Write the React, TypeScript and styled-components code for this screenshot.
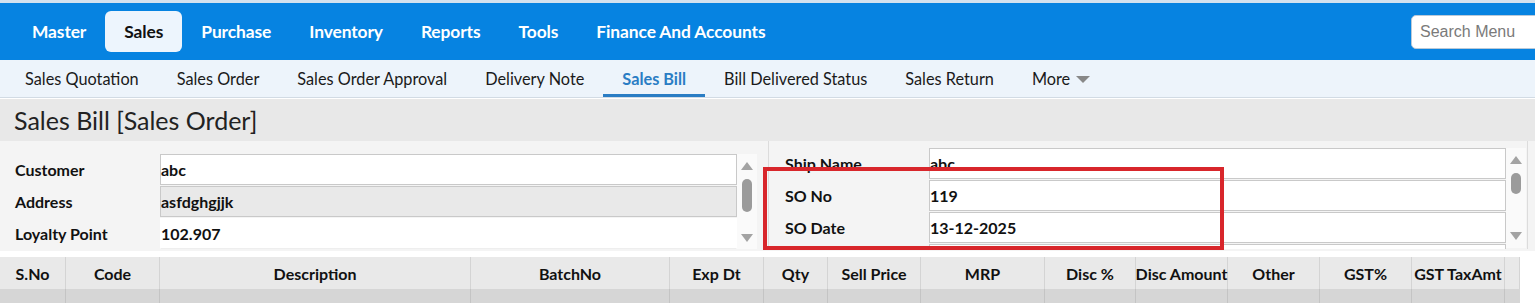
import React from "react"
import styled, { createGlobalStyle } from "styled-components"

const GlobalStyle = createGlobalStyle`
    * { box-sizing: border-box; }
    body {
        margin: 0;
        font-family: 'Lato', 'Noto Sans', sans-serif;
        background: #ffffff;
        color: #111;
        overflow: hidden;
    }
`

const Page = styled.div`
    width: 1535px;
    height: 303px;
    overflow: hidden;
    border-top: 3px solid #d3e2ef;
`

const TopBar = styled.div`
    height: 57px;
    background: #0683e1;
    display: flex;
    align-items: center;
    padding-left: 13px;
`
const MenuItem = styled.div<{ $active?: boolean }>`
    height: 41px;
    display: flex;
    align-items: center;
    padding: 0 19px;
    border-radius: 6px;
    font-size: 17.4px;
    font-weight: 700;
    letter-spacing: -0.1px;
    color: ${p => (p.$active ? "#111" : "#ffffff")};
    background: ${p => (p.$active ? "#edf5fd" : "transparent")};
`
const SearchBox = styled.input`
    margin-left: auto;
    width: 140px;
    height: 34px;
    margin-right: -16px;
    border: 1px solid #b9c9d8;
    border-radius: 5px;
    padding: 0 8px;
    font-family: 'Liberation Sans', Arial, sans-serif;
    font-size: 16px;
    &::placeholder { color: #7a7a7a; }
`

const SubBar = styled.div`
    height: 38px;
    background: #edf4fb;
    display: flex;
    align-items: stretch;
    padding-left: 6px;
    border-bottom: 1px solid #d2dbe4;
`
const SubItem = styled.div<{ $active?: boolean }>`
    display: flex;
    align-items: center;
    gap: 6px;
    padding: 0 19px;
    font-size: 16.3px;
    font-weight: ${p => (p.$active ? 700 : 400)};
    color: ${p => (p.$active ? "#2a7dc4" : "#1a1a1a")};
    border-bottom: 3px solid ${p => (p.$active ? "#2a7dc4" : "transparent")};
    padding-top: 3px;
`
const Caret = styled.span`
    width: 0;
    height: 0;
    border-left: 7px solid transparent;
    border-right: 7px solid transparent;
    border-top: 7px solid #888;
    margin-top: 2px;
`

const TitleBar = styled.div`
    margin-top: 1px;
    height: 42px;
    background: #e8e8e8;
    display: flex;
    align-items: center;
    padding-left: 14px;
    font-size: 25px;
    color: #222;
`

const FormArea = styled.div`
    position: relative;
    height: 110px;
    background: #f4f4f4;
    display: grid;
    grid-template-columns: 763px 1fr;
`
const Panel = styled.div<{ $top: number; $divider?: boolean }>`
    display: flex;
    padding-top: ${p => p.$top}px;
    height: 108px;
    overflow: hidden;
    ${p =>
        p.$divider &&
        `margin-left: 5px;
         border-left: 1px solid #dcdcdc;
         border-right: 1px solid #dcdcdc;
         margin-right: 7px;`}
`
const Fields = styled.div<{ $width: number }>`
    width: ${p => p.$width}px;
    display: flex;
    flex-direction: column;
`
const Row = styled.div<{ $labelWidth: number; $pad: number }>`
    display: grid;
    grid-template-columns: ${p => p.$labelWidth}px 1fr;
    height: 32px;
    flex-shrink: 0;
    align-items: stretch;
    & > span {
        padding-left: ${p => p.$pad}px;
    }
`
const Label = styled.span`
    font-size: 16px;
    font-weight: 700;
    display: flex;
    align-items: center;
    padding-bottom: 2px;
    color: #111;
`
const Field = styled.div<{ $tone?: "grey" | "plain" }>`
    background: ${p => (p.$tone === "grey" ? "#e9e9e9" : "#ffffff")};
    border: 1px solid ${p => (p.$tone === "plain" ? "#ffffff" : "#c9c9c9")};
    border-bottom-color: ${p => (p.$tone === "plain" ? "#eeeeee" : "#c9c9c9")};
    margin-bottom: 1px;
    display: flex;
    align-items: center;
    padding-left: 0;
    font-size: 16px;
    font-weight: 700;
    color: #111;
`

const ScrollTrack = styled.div<{ $height: number; $thumbTop: number; $thumbH: number }>`
    width: 20px;
    height: ${p => p.$height}px;
    background: #fafafa;
    display: flex;
    flex-direction: column;
    align-items: center;
    padding: 8px 0;
    & > i {
        width: 10px;
        height: ${p => p.$thumbH}px;
        margin-top: ${p => p.$thumbTop}px;
        background: #9b9b9b;
        border-radius: 5px;
    }
`
const ArrowUp = styled.b`
    width: 0;
    height: 0;
    border-left: 6px solid transparent;
    border-right: 6px solid transparent;
    border-bottom: 8px solid #a3a3a3;
`
const ArrowDown = styled.b`
    margin-top: auto;
    width: 0;
    height: 0;
    border-left: 6px solid transparent;
    border-right: 6px solid transparent;
    border-top: 8px solid #a3a3a3;
`

const Highlight = styled.div`
    position: absolute;
    left: 763px;
    top: 26px;
    width: 461px;
    height: 83px;
    border: 4px solid #d8262b;
    pointer-events: none;
`

const Grid = styled.div`
    margin-top: 6px;
    width: 1520px;
    display: grid;
    grid-template-columns: 66px 94px 311px 199px 94px 64px 93px 124px 91px 92px 92px 92px 93px 15px;
`
const HeadCell = styled.div`
    height: 32px;
    background: #e9e9e9;
    border-right: 1px solid #d4d4d4;
    display: flex;
    align-items: center;
    justify-content: center;
    font-size: 16px;
    font-weight: 700;
    white-space: nowrap;
    &:last-child { border-right: none; }
`
const BodyCell = styled.div`
    height: 14px;
    background: #d6d6d6;
    border-right: 1px solid #c4c4c4;
    &:last-child { border-right: none; }
`

const menu = ["Master", "Sales", "Purchase", "Inventory", "Reports", "Tools", "Finance And Accounts"]
const subMenu = ["Sales Quotation", "Sales Order", "Sales Order Approval", "Delivery Note", "Sales Bill", "Bill Delivered Status", "Sales Return"]
const columns = ["S.No", "Code", "Description", "BatchNo", "Exp Dt", "Qty", "Sell Price", "MRP", "Disc %", "Disc Amount", "Other", "GST%", "GST TaxAmt", ""]

export default function App() {
    return (
        <Page>
            <GlobalStyle />
            <TopBar>
                {menu.map(m => (
                    <MenuItem key={m} $active={m === "Sales"}>{m}</MenuItem>
                ))}
                <SearchBox placeholder="Search Menu" />
            </TopBar>
            <SubBar>
                {subMenu.map(s => (
                    <SubItem key={s} $active={s === "Sales Bill"}>{s}</SubItem>
                ))}
                <SubItem>More <Caret /></SubItem>
            </SubBar>
            <TitleBar>Sales Bill [Sales Order]</TitleBar>
            <FormArea>
                <Panel $top={13}>
                    <Fields $width={737}>
                        <Row $labelWidth={160} $pad={15}>
                            <Label>Customer</Label>
                            <Field>abc</Field>
                        </Row>
                        <Row $labelWidth={160} $pad={15}>
                            <Label>Address</Label>
                            <Field $tone="grey">asfdghgjjk</Field>
                        </Row>
                        <Row $labelWidth={160} $pad={15}>
                            <Label>Loyalty Point</Label>
                            <Field $tone="plain">102.907</Field>
                        </Row>
                    </Fields>
                    <ScrollTrack $height={96} $thumbTop={9} $thumbH={33}>
                        <ArrowUp />
                        <i />
                        <ArrowDown />
                    </ScrollTrack>
                </Panel>
                <Panel $top={7} $divider>
                    <Fields $width={737}>
                        <Row $labelWidth={160} $pad={16}>
                            <Label>Ship Name</Label>
                            <Field>abc</Field>
                        </Row>
                        <Row $labelWidth={160} $pad={16}>
                            <Label>SO No</Label>
                            <Field>119</Field>
                        </Row>
                        <Row $labelWidth={160} $pad={16}>
                            <Label>SO Date</Label>
                            <Field>13-12-2025</Field>
                        </Row>
                        <Row $labelWidth={160} $pad={16}>
                            <Label></Label>
                            <Field></Field>
                        </Row>
                    </Fields>
                    <ScrollTrack $height={100} $thumbTop={9} $thumbH={21}>
                        <ArrowUp />
                        <i />
                        <ArrowDown />
                    </ScrollTrack>
                </Panel>
                <Highlight />
            </FormArea>
            <Grid>
                {columns.map((c, i) => (
                    <HeadCell key={"h" + i}>{c}</HeadCell>
                ))}
                {columns.map((_, i) => (
                    <BodyCell key={"b" + i} />
                ))}
            </Grid>
        </Page>
    )
}
